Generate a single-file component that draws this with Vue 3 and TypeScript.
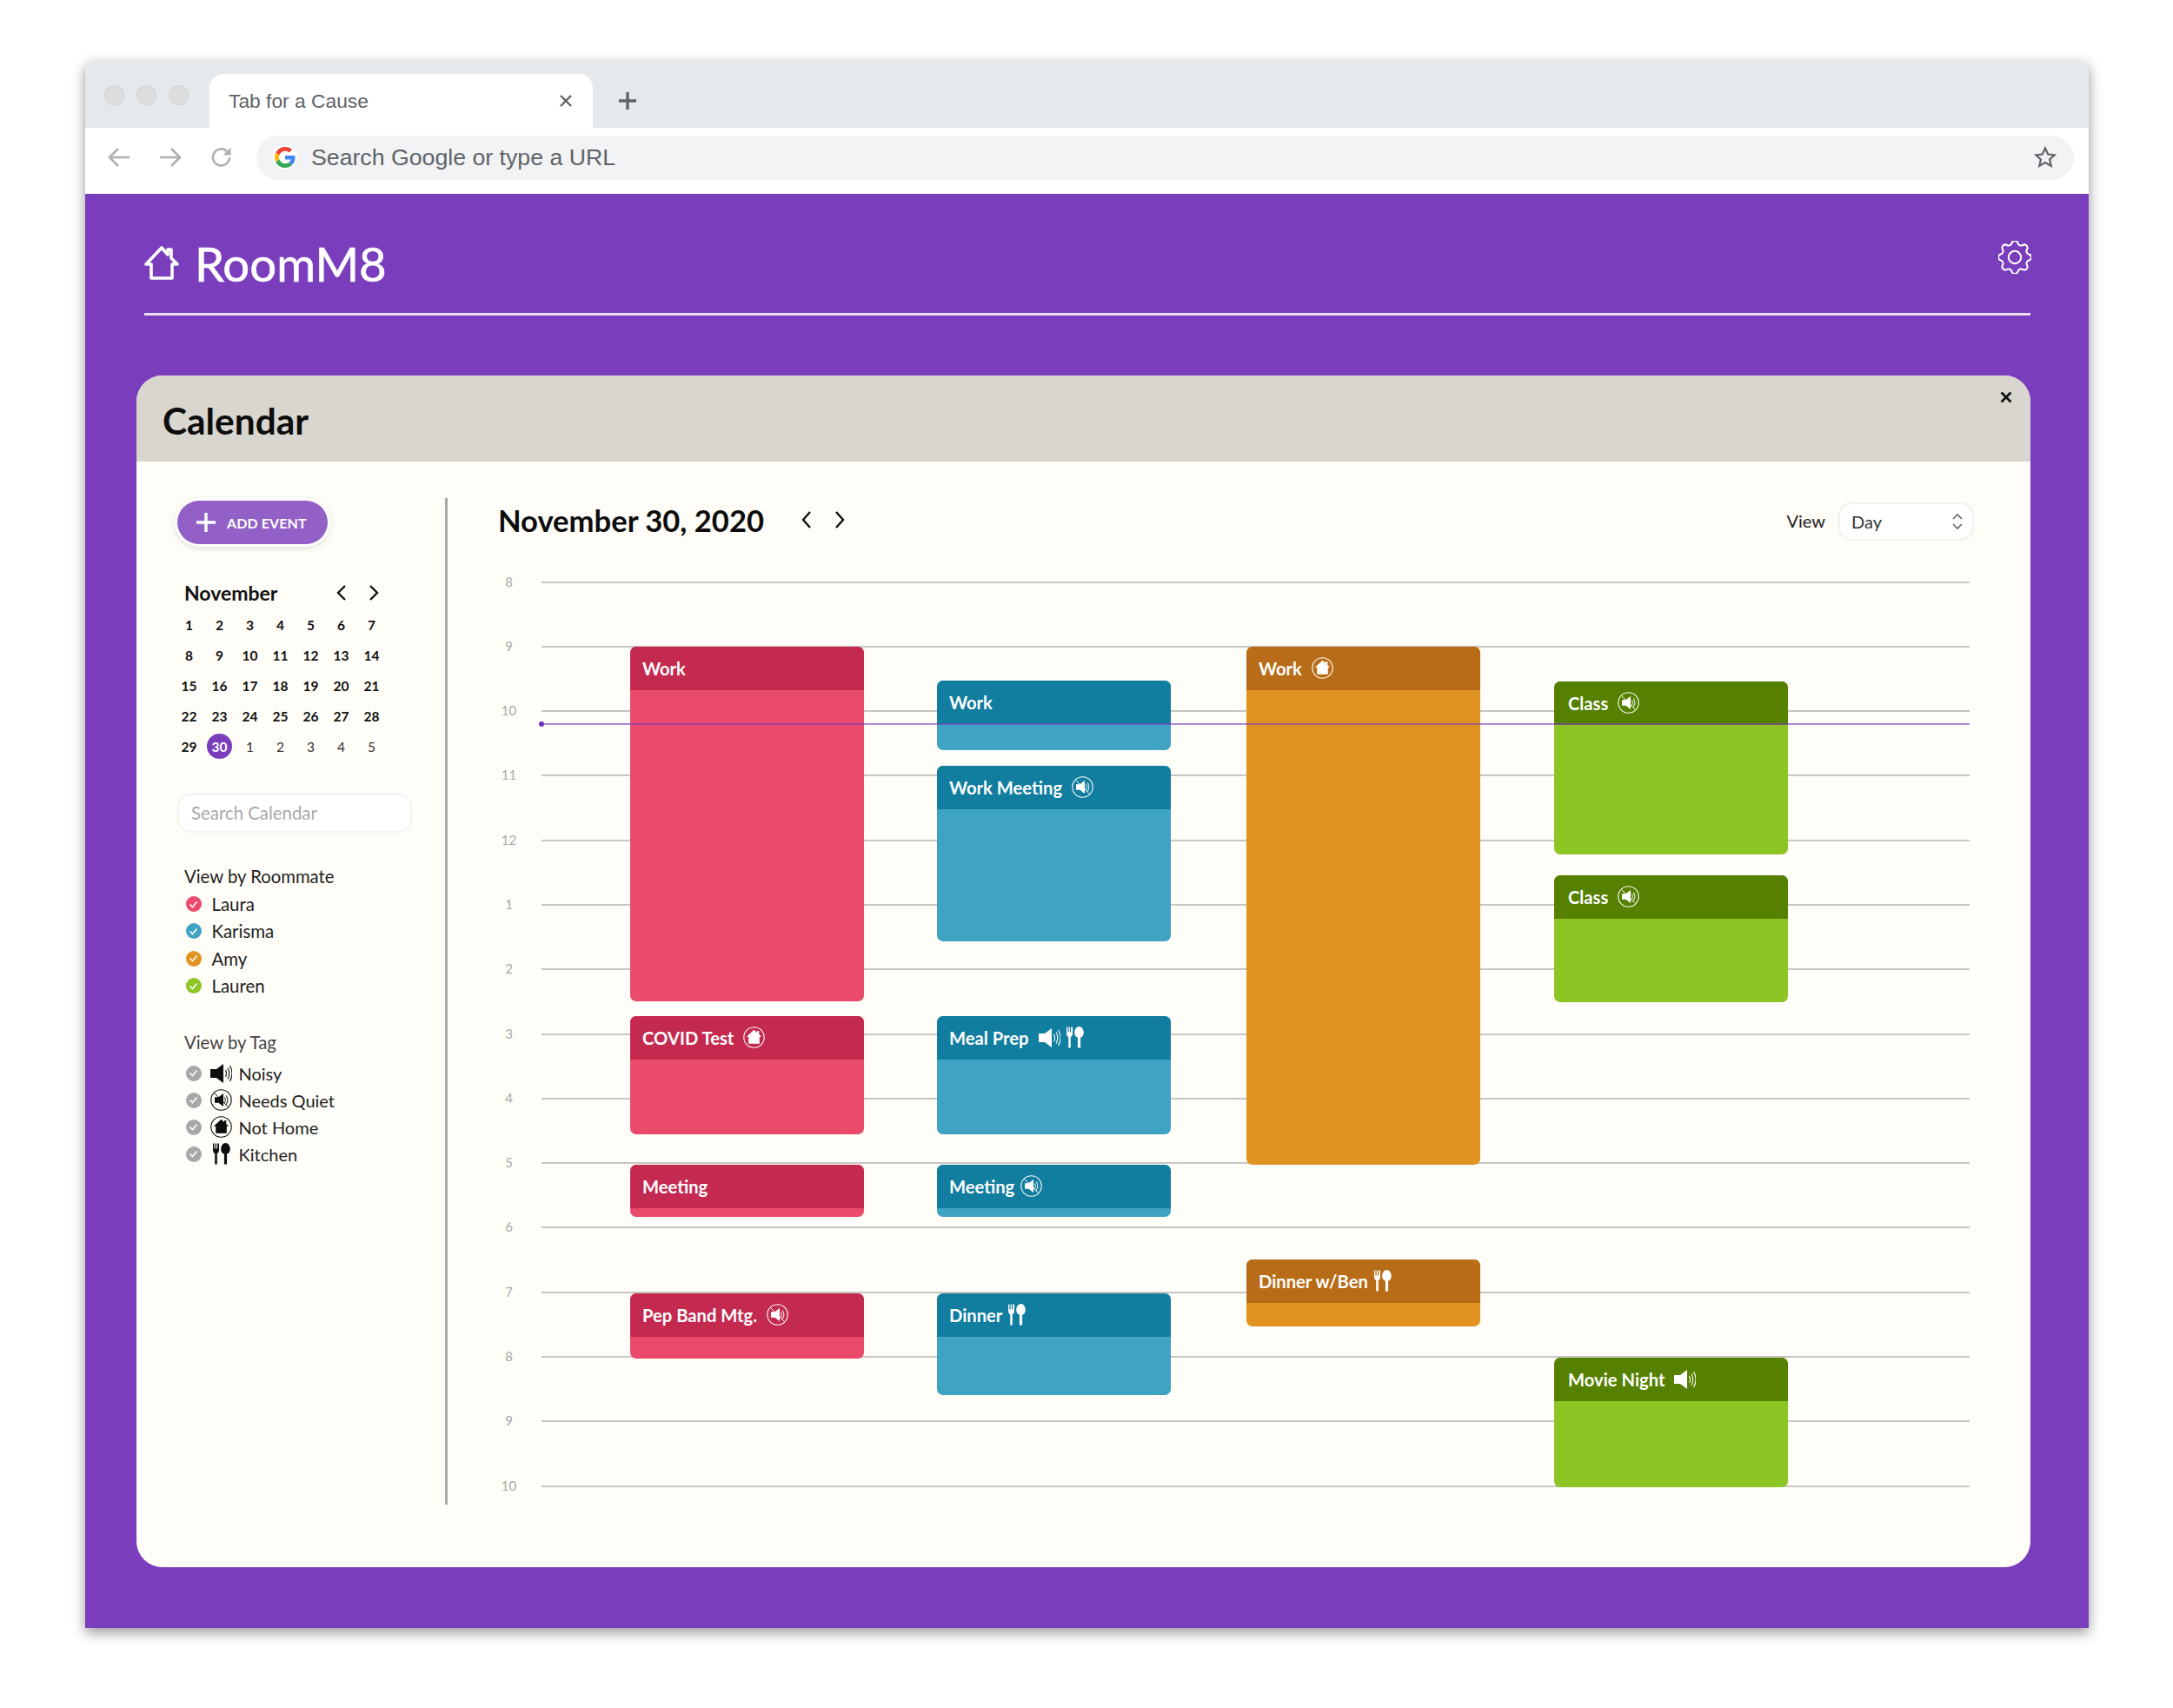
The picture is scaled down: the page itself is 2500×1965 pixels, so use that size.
<script setup lang="ts">
type Tag = 'noisy' | 'quiet' | 'home' | 'kitchen'
interface Ev { title: string; color: string; x: number; top: number; bottom: number; icons: Tag[]; gap?: boolean }

const hours = ['8', '9', '10', '11', '12', '1', '2', '3', '4', '5', '6', '7', '8', '9', '10']
const days: number[] = Array.from({ length: 30 }, (_, i) => i + 1)
const nextDays = [1, 2, 3, 4, 5]
const roommates = [
  { name: 'Laura', cls: 'c-red' },
  { name: 'Karisma', cls: 'c-blue' },
  { name: 'Amy', cls: 'c-orange' },
  { name: 'Lauren', cls: 'c-green' },
]
const tags: { name: string; icon: Tag }[] = [
  { name: 'Noisy', icon: 'noisy' },
  { name: 'Needs Quiet', icon: 'quiet' },
  { name: 'Not Home', icon: 'home' },
  { name: 'Kitchen', icon: 'kitchen' },
]
const iconSize: Record<Tag, [number, number]> = {
  noisy: [25, 22],
  quiet: [25, 25],
  home: [25, 25],
  kitchen: [20, 25],
}
const X = [725, 1078, 1434, 1788]
const events: Ev[] = [
  { title: 'Work', color: 'c-red', x: X[0], top: 744, bottom: 1152, icons: [] },
  { title: 'COVID Test', color: 'c-red', x: X[0], top: 1169, bottom: 1305, icons: ['home'] },
  { title: 'Meeting', color: 'c-red', x: X[0], top: 1340, bottom: 1400, icons: [] },
  { title: 'Pep Band Mtg.', color: 'c-red', x: X[0], top: 1488, bottom: 1563, icons: ['quiet'] },
  { title: 'Work', color: 'c-blue', x: X[1], top: 783, bottom: 863, icons: [] },
  { title: 'Work Meeting', color: 'c-blue', x: X[1], top: 881, bottom: 1083, icons: ['quiet'] },
  { title: 'Meal Prep', color: 'c-blue', x: X[1], top: 1169, bottom: 1305, icons: ['noisy', 'kitchen'] },
  { title: 'Meeting', color: 'c-blue', x: X[1], top: 1340, bottom: 1400, icons: ['quiet'], gap: true },
  { title: 'Dinner', color: 'c-blue', x: X[1], top: 1488, bottom: 1605, icons: ['kitchen'], gap: true },
  { title: 'Work', color: 'c-orange', x: X[2], top: 744, bottom: 1340, icons: ['home'] },
  { title: 'Dinner w/Ben', color: 'c-orange', x: X[2], top: 1449, bottom: 1526, icons: ['kitchen'], gap: true },
  { title: 'Class', color: 'c-green', x: X[3], top: 784, bottom: 983, icons: ['quiet'] },
  { title: 'Class', color: 'c-green', x: X[3], top: 1007, bottom: 1153, icons: ['quiet'] },
  { title: 'Movie Night', color: 'c-green', x: X[3], top: 1562, bottom: 1711, icons: ['noisy'] },
]
const originX = 574
const originY = 669
function evStyle(e: Ev) {
  return {
    left: `${e.x - originX}px`,
    top: `${e.top - originY}px`,
    height: `${e.bottom - e.top}px`,
  }
}
</script>

<template>
  <div class="page">
    <svg class="defs" aria-hidden="true">
      <defs>
        <symbol id="i-noisy" viewBox="0 0 25 22">
          <path fill="currentColor" d="M0 6h7L15 0v22l-8-6H0z" />
          <path fill="none" stroke="currentColor" stroke-width="1.1" d="M17.5 7q2 4 0 8M20 4.5q3.5 6.5 0 13M22.5 2q5 9 0 18" />
        </symbol>
        <symbol id="i-quiet" viewBox="0 0 25 25">
          <circle cx="12.5" cy="12.5" r="11.7" fill="none" stroke="currentColor" stroke-width="1.1" />
          <path fill="currentColor" d="M5 9.3h4.4L15 5v15l-5.6-4.3H5z" />
          <path fill="none" stroke="currentColor" stroke-width="1" d="M16.5 9.5q1.8 3 0 6M18.5 7.5q3 5 0 10" />
          <path fill="none" stroke="currentColor" stroke-width="1" d="M4.5 4.5l16 16" />
        </symbol>
        <symbol id="i-home" viewBox="0 0 25 25">
          <circle cx="12.5" cy="12.5" r="11.7" fill="none" stroke="currentColor" stroke-width="1.1" />
          <path fill="currentColor" d="M12.5 3.8l3.6 3.2V5h2.2v4l2.9 2.8h-2.4v8H6.2v-8H3.800z" />
        </symbol>
        <symbol id="i-kitchen" viewBox="0 0 20 25">
          <path fill="currentColor" d="M0 0.5h1.4V6.5h1.2V0.5h1.3V6.5h1.2V0.5H7V8.500q0 2.6-2.2 3.4V24.5H2.2V11.9Q0 11.1 0 8.500z" />
          <path fill="currentColor" d="M14.5 0c3 0 5.3 3.3 5.3 7 0 3-1.500 5-3.700 5.600V24.500h-3.200V12.600C10.700 12 9.200 10 9.200 7c0-3.700 2.300-7 5.300-7z" />
        </symbol>
      </defs>
    </svg>

    <div class="window">
      <div class="tabstrip">
        <div class="dots"><span></span><span></span><span></span></div>
        <div class="tab">
          <span class="tab-title">Tab for a Cause</span>
          <svg class="tab-x" width="16" height="16" viewBox="0 0 16 16"><path d="M2 2l12 12M14 2L2 14" /></svg>
        </div>
        <svg class="tab-plus" width="22" height="22" viewBox="0 0 22 22"><path d="M11 1v20M1 11h20" /></svg>
      </div>

      <div class="toolbar">
        <svg class="nav" width="26" height="24" viewBox="0 0 26 24"><path d="M25 12H2M12 2L2 12l10 10" /></svg>
        <svg class="nav" width="26" height="24" viewBox="0 0 26 24"><path d="M1 12h23M14 2l10 10-10 10" /></svg>
        <svg class="nav" width="26" height="26" viewBox="0 0 26 26"><path d="M22 13a9.5 9.5 0 1 1-3-7" /><path class="nav-fill" d="M23.5 1.5v9h-9z" /></svg>
        <div class="omnibox">
          <span class="g-wrap">
            <svg width="24" height="24" viewBox="0 0 48 48">
              <path fill="#EA4335" d="M24 9.5c3.5 0 6.7 1.2 9.2 3.6l6.9-6.9C35.9 2.4 30.5 0 24 0 14.6 0 6.5 5.4 2.6 13.2l8 6.2C12.4 13.7 17.7 9.5 24 9.5z" />
              <path fill="#4285F4" d="M46.9 24.5c0-1.6-.1-3.1-.4-4.5H24v9h12.9c-.6 3-2.2 5.5-4.7 7.2l7.7 6c4.5-4.2 7-10.3 7-17.7z" />
              <path fill="#FBBC05" d="M10.5 28.6c-.5-1.4-.8-3-.8-4.6s.3-3.2.8-4.6l-8-6.2C.9 16.5 0 20.1 0 24s.9 7.5 2.6 10.8l7.900-6.2z" />
              <path fill="#34A853" d="M24 48c6.5 0 11.900-2.1 15.900-5.8l-7.700-6c-2.200 1.4-4.900 2.300-8.200 2.300-6.300 0-11.600-4.200-13.500-9.900l-8 6.200C6.500 42.600 14.600 48 24 48z" />
            </svg>
          </span>
          <span class="omni-text">Search Google or type a URL</span>
          <svg class="star" width="26" height="26" viewBox="0 0 26 26"><path d="M13 2.5l3.2 7 7.6.8-5.7 5.1 1.6 7.5-6.7-3.8-6.7 3.8 1.6-7.5-5.7-5.1 7.6-.8z" /></svg>
        </div>
      </div>

      <div class="app">
        <header class="app-head">
          <div class="brand">
            <svg class="brand-icon" width="40" height="40" viewBox="0 0 40 40"><path d="M8 37h24V21h6l-7-7V4h-4v6L20 2 2 21h6z" /></svg>
            <span class="brand-name">RoomM8</span>
          </div>
          <svg class="gear" width="38" height="38" viewBox="3 3 18 18">
            <path d="M10.325 4.317c.426-1.756 2.924-1.756 3.35 0a1.724 1.724 0 002.573 1.066c1.543-.94 3.31.826 2.37 2.37a1.724 1.724 0 001.065 2.572c1.756.426 1.756 2.924 0 3.35a1.724 1.724 0 00-1.066 2.573c.94 1.543-.826 3.31-2.37 2.37a1.724 1.724 0 00-2.572 1.065c-.426 1.756-2.924 1.756-3.35 0a1.724 1.724 0 00-2.573-1.066c-1.543.94-3.31-.826-2.37-2.37a1.724 1.724 0 00-1.065-2.572c-1.756-.426-1.756-2.924 0-3.35a1.724 1.724 0 001.066-2.573c-.94-1.543.826-3.31 2.37-2.37.996.608 2.296.07 2.572-1.065z" />
            <circle cx="12" cy="12" r="3.4" />
          </svg>
        </header>

        <section class="card">
          <div class="card-head">
            <h1>Calendar</h1>
            <svg class="card-x" width="14" height="14" viewBox="0 0 14 14"><path d="M1.5 1.5l11 11M12.5 1.5l-11 11" /></svg>
          </div>
          <div class="card-body">
            <aside class="side">
              <button class="add">
                <svg width="22" height="22" viewBox="0 0 22 22"><path d="M11 0v22M0 11h22" /></svg>
                <span>ADD EVENT</span>
              </button>
              <div class="mini-head">
                <span class="mini-month">November</span>
                <span class="mini-nav">
                  <svg width="12" height="20" viewBox="0 0 12 20"><path d="M10 2l-8 8 8 8" /></svg>
                  <svg width="12" height="20" viewBox="0 0 12 20"><path d="M2 2l8 8-8 8" /></svg>
                </span>
              </div>
              <div class="mini-grid">
                <span v-for="d in days" :key="d" class="day" :class="{ today: d === 30 }"><b>{{ d }}</b></span>
                <span v-for="d in nextDays" :key="'n' + d" class="day next"><b>{{ d }}</b></span>
              </div>
              <div class="search">Search Calendar</div>

              <div class="filter-title first">View by Roommate</div>
              <ul class="filters">
                <li v-for="r in roommates" :key="r.name">
                  <span class="check" :class="r.cls"><svg width="11" height="9" viewBox="0 0 11 9"><path d="M1.5 4.5l3 3 5-6" /></svg></span>
                  <span class="f-name">{{ r.name }}</span>
                </li>
              </ul>

              <div class="filter-title tagged">View by Tag</div>
              <ul class="filters tags">
                <li v-for="t in tags" :key="t.name">
                  <span class="check grey"><svg width="11" height="9" viewBox="0 0 11 9"><path d="M1.5 4.5l3 3 5-6" /></svg></span>
                  <span class="tag-icon"><svg :width="iconSize[t.icon][0]" :height="iconSize[t.icon][1]"><use :href="'#i-' + t.icon" /></svg></span>
                  <span class="f-name">{{ t.name }}</span>
                </li>
              </ul>
            </aside>

            <main class="main">
              <div class="main-head">
                <h2>November 30, 2020</h2>
                <span class="main-nav">
                  <svg width="14" height="22" viewBox="0 0 14 22"><path d="M11 2L3 11l8 9" /></svg>
                  <svg width="14" height="22" viewBox="0 0 14 22"><path d="M3 2l8 9-8 9" /></svg>
                </span>
                <span class="view-label">View</span>
                <div class="select">
                  <span>Day</span>
                  <svg width="14" height="20" viewBox="0 0 14 20"><path d="M2 7l5-5 5 5M2 13l5 5 5-5" /></svg>
                </div>
              </div>

              <div class="timeline">
                <div v-for="(h, i) in hours" :key="i" class="hour">
                  <span class="hour-label">{{ h }}</span>
                  <span class="hour-line"></span>
                </div>

                <article v-for="(e, i) in events" :key="i" class="event" :class="e.color" :style="evStyle(e)">
                  <div class="event-head">
                    <span class="event-title">{{ e.title }}</span>
                    <span class="event-icons" :class="{ tight: e.gap }">
                      <svg v-for="ic in e.icons" :key="ic" :width="iconSize[ic][0]" :height="iconSize[ic][1]"><use :href="'#i-' + ic" /></svg>
                    </span>
                  </div>
                </article>

                <div class="now"></div>
              </div>
            </main>
          </div>
        </section>
      </div>
    </div>
  </div>
</template>

<style>
html, body { margin: 0; background: #fff; }
</style>

<style scoped>
.page { width: 2500px; height: 1965px; box-sizing: border-box; padding: 70px 97px 92px 98px; background: #fff; font-family: Lato, "Open Sans", sans-serif; color: #1a1a1a; }
.defs { position: absolute; width: 0; height: 0; }
.window { height: 100%; display: flex; flex-direction: column; border-radius: 10px 10px 0 0; overflow: hidden; box-shadow: 0 5px 15px rgba(0,0,0,.42); background: #fff; }

.tabstrip { height: 77px; flex: none; background: #e6e9ec; display: flex; align-items: flex-end; }
.dots { display: flex; gap: 14px; width: 143px; box-sizing: border-box; padding: 0 0 26px 22px; }
.dots span { width: 23px; height: 23px; border-radius: 50%; background: #dddddd; box-shadow: inset 0 0 0 1px #d4d4d4; }
.tab { width: 441px; height: 62px; background: #fff; border-radius: 16px 16px 0 0; display: flex; align-items: center; justify-content: space-between; box-sizing: border-box; padding: 0 23px 0 22px; margin-top: 15px; }
.tab-title { font-family: "Liberation Sans", sans-serif; font-size: 22.8px; color: #5f6368; }
.tab-x path { stroke: #5f6368; stroke-width: 2.4; fill: none; }
.tab-plus { margin: 0 0 20px 29px; }
.tab-plus path { stroke: #5f6368; stroke-width: 3.4; fill: none; }

.toolbar { height: 76px; flex: none; background: #fff; display: flex; align-items: center; box-sizing: border-box; padding: 0 17px 8px 26px; }
.nav { margin-right: 33px; }
.nav path { stroke: #b0b0b0; stroke-width: 2.6; fill: none; }
.nav .nav-fill { fill: #b0b0b0; stroke: none; }
.omnibox { flex: 1; height: 51px; margin-left: -6px; background: #f1f3f4; border-radius: 26px; display: flex; align-items: center; padding: 0 20px 0 19px; }
.g-wrap { width: 28px; height: 28px; border-radius: 50%; background: #fff; display: flex; align-items: center; justify-content: center; flex: none; }
.omni-text { margin-left: 16px; font-family: "Liberation Sans", sans-serif; font-size: 26.7px; color: #5f6368; flex: 1; }
.star path { fill: none; stroke: #5f6368; stroke-width: 2.2; }

.app { flex: 1; background: #7a3ebd; padding: 0 67px 70px 59px; display: flex; flex-direction: column; min-height: 0; }
.app-head { height: 140px; flex: none; box-sizing: border-box; margin-left: 9px; border-bottom: 3px solid #ebe2f5; display: flex; justify-content: space-between; padding-top: 54px; }
.brand { display: flex; align-items: flex-start; }
.brand-icon path { fill: none; stroke: #fff; stroke-width: 3.6; stroke-linejoin: round; }
.brand-icon { margin-top: 6px; }
.brand-name { margin-left: 18px; font-size: 54.5px; line-height: 52px; color: #fff; font-weight: 400; -webkit-text-stroke: .6px #fff; }
.gear { margin: 0 -1px 0 0; }
.gear path, .gear circle { fill: none; stroke: #fff; stroke-width: .95; }

.card { margin-top: 69px; flex: 1; min-height: 0; background: #fffdf8; border-radius: 30px; overflow: hidden; display: flex; flex-direction: column; }
.card-head { height: 99px; flex: none; background: #d9d6cf; display: flex; align-items: center; justify-content: space-between; padding: 0 21px 0 30px; }
.card-head h1 { margin: 4px 0 0; font-size: 42.4px; font-weight: 700; color: #0d0d0d; }
.card-x { margin-bottom: 50px; }
.card-x path { stroke: #111; stroke-width: 2.8; fill: none; }
.card-body { flex: 1; min-height: 0; display: flex; padding: 42px 0 72px; }

.side { width: 358px; flex: none; box-sizing: border-box; border-right: 3px solid #a9a9a9; padding-left: 47px; }
.add { margin-top: 3px; width: 173px; height: 50px; border: 0; border-radius: 25px; background: #9260c6; box-shadow: 0 0 0 3px #fff, 0 2px 10px rgba(0,0,0,.24); display: flex; align-items: center; padding: 0 0 0 22px; color: #fff; font-family: inherit; }
.add svg path { stroke: #fff; stroke-width: 3.4; fill: none; }
.add span { margin-left: 13px; font-size: 16px; font-weight: 700; letter-spacing: .1px; }
.mini-head { margin-top: 40.5px; height: 30px; display: flex; align-items: center; justify-content: space-between; padding-left: 8px; width: 224px; }
.mini-month { font-size: 23px; font-weight: 700; color: #111; }
.mini-nav { display: flex; gap: 25px; }
.mini-nav path { stroke: #111; stroke-width: 2.4; fill: none; }
.mini-grid { margin: 4.5px 0 0 -4px; display: grid; grid-template-columns: repeat(7, 35px); grid-auto-rows: 35px; }
.day { display: flex; align-items: center; justify-content: center; }
.day b { font-size: 15.5px; font-weight: 700; color: #111; }
.day.next b { font-weight: 400; color: #333; }
.day.today b { width: 29px; height: 29px; border-radius: 50%; background: #7a3ebd; color: #fff; display: flex; align-items: center; justify-content: center; }
.search { margin-top: 38.5px; margin-left: 2px; width: 266px; height: 41px; box-sizing: border-box; background: #fff; border-radius: 14px; box-shadow: 0 0 4px rgba(0,0,0,.12); padding-left: 14px; line-height: 41px; font-size: 20.4px; color: #a9a9a9; }
.filter-title { font-size: 20.3px; line-height: 30px; color: #222; margin-left: 8px; }
.filter-title.first { margin-top: 37px; }
.filter-title.tagged { margin-top: 34px; color: #444; }
.filters { list-style: none; margin: 2px 0 0 9px; padding: 0; }
.filters li { height: 31.3px; display: flex; align-items: center; }
.filters.tags { margin-top: 5.5px; }
.filters.tags li { height: 31px; }
.check { width: 18px; height: 18px; margin-left: .5px; border-radius: 50%; display: flex; align-items: center; justify-content: center; flex: none; }
.check path { stroke: #fff; stroke-width: 1.6; fill: none; }
.check.c-red { background: #ea4a6b; }
.check.c-blue { background: #3fa3c3; }
.check.c-orange { background: #e09320; }
.check.c-green { background: #8dc524; }
.check.grey { background: #a8a8a8; }
.f-name { margin-left: 12px; font-size: 20.4px; color: #222; }
.tag-icon { width: 26px; margin-left: 10px; display: flex; justify-content: center; color: #0d0d0d; }
.tags .f-name { margin-left: 7px; font-size: 20px; }

.main { flex: 1; min-width: 0; padding: 0 67px 0 59px; display: flex; flex-direction: column; }
.main-head { height: 54px; flex: none; display: flex; align-items: center; }
.main-head h2 { margin: -3px 0 0 -1px; font-size: 34.6px; font-weight: 700; color: #0d0d0d; }
.main-nav { display: flex; gap: 24px; margin-left: 42px; margin-top: -4px; }
.main-nav path { stroke: #111; stroke-width: 2.4; fill: none; }
.view-label { margin-left: auto; margin-top: -2px; font-size: 20px; color: #222; }
.select { margin-left: 17px; width: 152px; height: 40px; box-sizing: border-box; background: #fff; border-radius: 14px; box-shadow: 0 0 4px rgba(0,0,0,.14); display: flex; align-items: center; justify-content: space-between; padding: 0 10px 0 13px; font-size: 20px; color: #333; }
.select path { stroke: #666; stroke-width: 1.6; fill: none; }

.timeline { position: relative; margin-top: 41.5px; margin-right: 3px; flex: 1; }
.hour { height: 74.3px; display: flex; }
.hour-label { width: 23px; margin-right: 26px; height: 2px; line-height: 0; text-align: center; font-size: 15px; color: #a8a8a8; flex: none; }
.hour-line { flex: 1; height: 2px; background: #c6c6c2; }

.event { position: absolute; width: 269px; border-radius: 7px; overflow: hidden; }
.event-head { height: 50px; display: flex; align-items: center; padding-left: 14px; color: #fff; }
.event-title { font-size: 20.2px; font-weight: 700; }
.event-icons { margin-left: 11px; display: flex; align-items: center; gap: 7px; }
.event-icons.tight { margin-left: 7px; }
.event-icons:empty { display: none; }
.event.c-red { background: #ea4a6b; }
.event.c-red .event-head { background: #c4294f; }
.event.c-blue { background: #3fa3c3; }
.event.c-blue .event-head { background: #117d9f; }
.event.c-orange { background: #e09320; }
.event.c-orange .event-head { background: #b96c18; }
.event.c-green { background: #8dc524; }
.event.c-green .event-head { background: #568000; padding-left: 16px; }
.now { position: absolute; left: 47px; right: 0; top: 163px; height: 2px; background: rgba(122,62,189,.6); }
.now::before { content: ""; position: absolute; left: -1px; top: -2px; width: 6px; height: 6px; border-radius: 50%; background: #6a2fc0; }
</style>
